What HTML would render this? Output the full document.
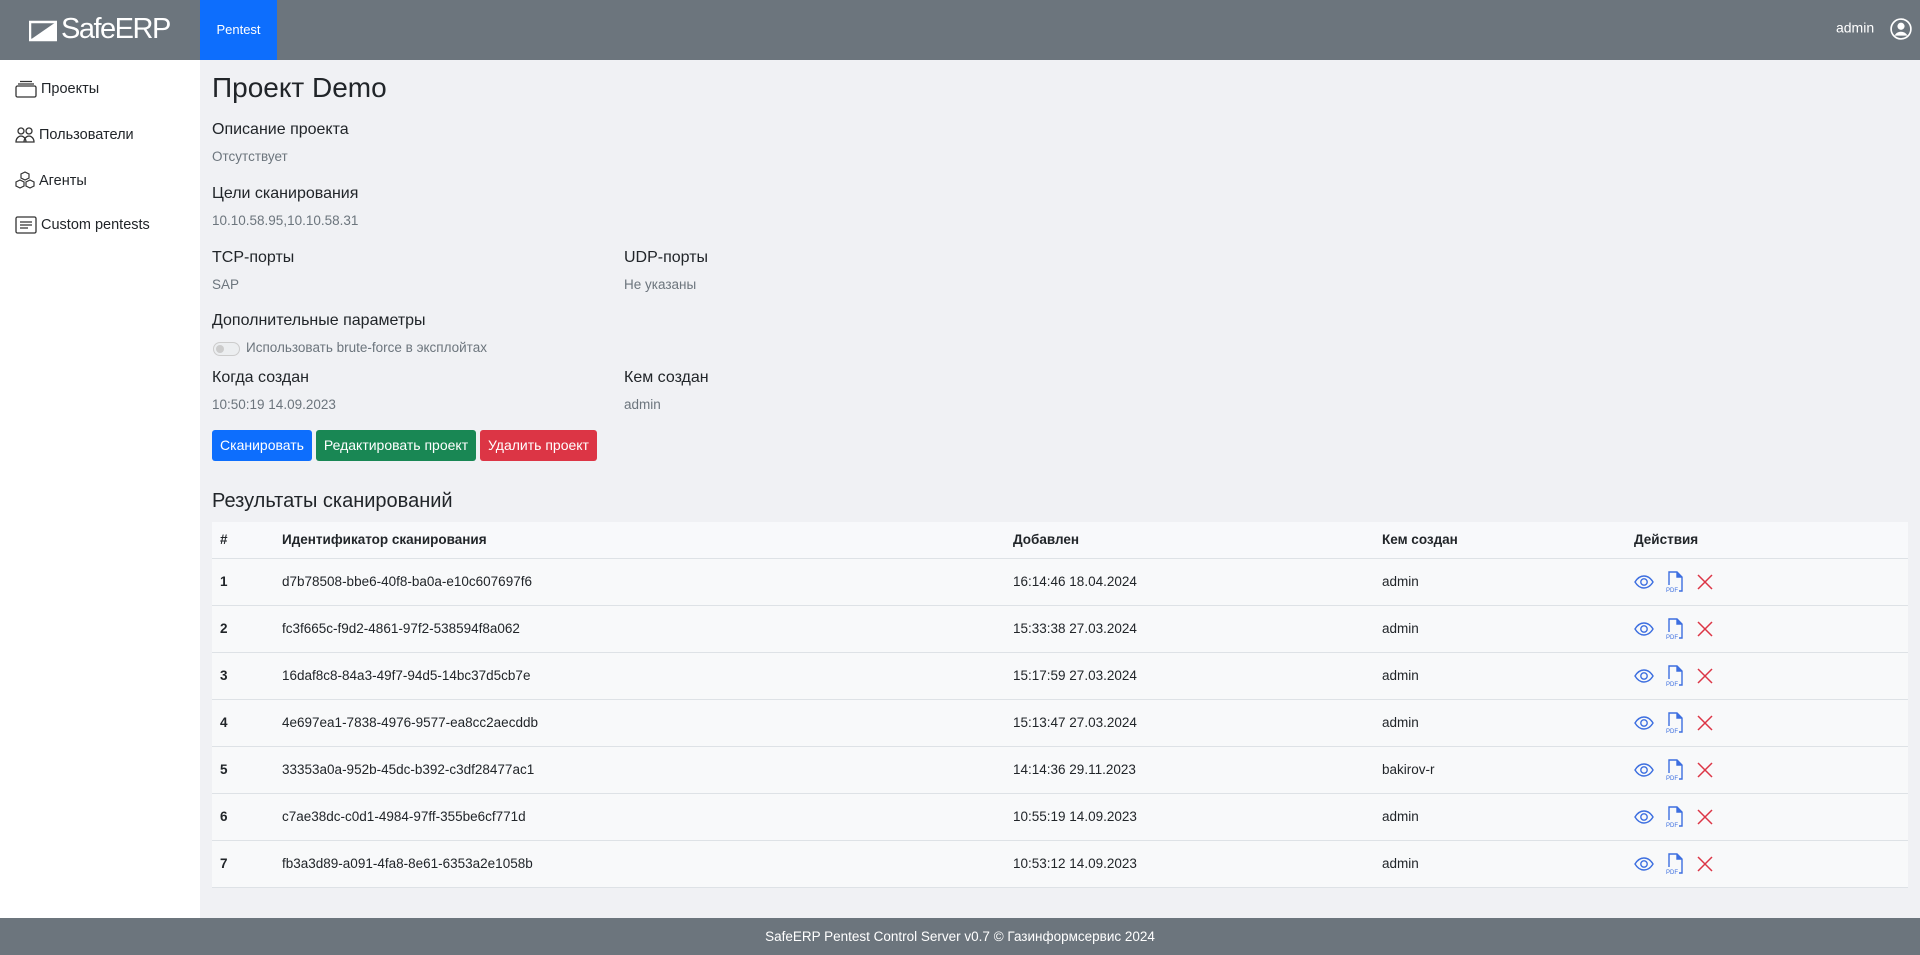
<!DOCTYPE html>
<html><head><meta charset="utf-8"><style>
*{box-sizing:border-box;margin:0;padding:0}
body{width:1920px;height:955px;overflow:hidden;font-family:"Liberation Sans","Noto Sans CJK SC",sans-serif;background:#f0f1f4;color:#212529;position:relative}
.nav{position:absolute;left:0;top:0;width:1920px;height:60px;background:#6c757d}
.logo{position:absolute;left:29px;top:13px;color:#fff;font-size:29px;display:flex;align-items:center;letter-spacing:-1.5px}
.tab{position:absolute;left:200px;top:0;width:77px;height:60px;background:#0d6efd;color:#fff;font-size:13px;text-align:center;line-height:60px}
.admin{position:absolute;right:8px;top:18px;color:#fff;font-size:14px}
.side{position:absolute;left:0;top:60px;width:200px;height:858px;background:#fff}
.si{position:absolute;left:15px;font-size:14.5px;display:flex;align-items:center;gap:4px}
.t{position:absolute;font-size:16px;white-space:nowrap}
.v{position:absolute;font-size:13.5px;color:#6c757d;white-space:nowrap}
.btn{position:absolute;top:430px;height:31px;color:#fff;font-size:14px;line-height:31px;text-align:center;border-radius:3px}
table{position:absolute;left:212px;top:522px;width:1696px;border-collapse:collapse;font-size:13.5px;background:#f8f9fa}
td,th{text-align:left;border-bottom:1px solid #dee2e6;padding:0 0 0 8px}
th{height:36px;font-weight:bold}
td{height:47px}
td:first-child{font-weight:bold}
.foot{position:absolute;left:0;top:918px;width:1920px;height:37px;background:#6c757d;color:#fff;font-size:13.5px;text-align:center;line-height:37px}
.ic{display:inline-flex;gap:12px;align-items:center;vertical-align:middle}
</style></head><body>
<div class="nav">
<div class="logo"><svg width="28" height="24" viewBox="0 0 28 24"><rect x="1" y="4" width="26" height="18" fill="none" stroke="#fff" stroke-width="2.5"/><path d="M1 22 L27 4 L27 22Z" fill="#fff"/></svg><span style="margin-left:4px">Safe<b style="font-weight:normal">ERP</b></span></div>
<div class="tab">Pentest</div>
<div class="admin">admin <svg width="22" height="22" viewBox="0 0 16 16" style="vertical-align:middle;margin-left:12px"><circle cx="8" cy="8" r="7.2" fill="none" stroke="#fff" stroke-width="1.2"/><circle cx="8" cy="6" r="2.6" fill="#fff"/><path d="M3.3 12.8C4.5 10.8 6 10 8 10s3.5.8 4.7 2.8" fill="#fff"/></svg></div>
</div>
<div class="side">
<div class="si" style="top:20px"><svg width="22" height="18" viewBox="0 0 22 18" fill="none" stroke="#333" stroke-width="1.3"><rect x="1" y="6" width="20" height="11" rx="1.5"/><path d="M3 4h16M5 1.5h12"/></svg>Проекты</div>
<div class="si" style="top:66px"><svg width="20" height="18" viewBox="0 0 20 18" fill="none" stroke="#333" stroke-width="1.3"><circle cx="6" cy="5" r="3"/><circle cx="14" cy="5" r="3"/><path d="M1 16c0-4 3-6 5-6s5 2 5 6zM9 16c0-4 3-6 5-6s5 2 5 6z"/></svg>Пользователи</div>
<div class="si" style="top:111px"><svg width="20" height="20" viewBox="0 0 20 20" fill="none" stroke="#333" stroke-width="1.2"><path d="M10 1l4 2v4l-4 2-4-2V3zM5 9l4 2v4l-4 2-4-2v-4zM15 9l4 2v4l-4 2-4-2v-4z"/></svg>Агенты</div>
<div class="si" style="top:156px"><svg width="22" height="18" viewBox="0 0 22 18" fill="none" stroke="#333" stroke-width="1.3"><rect x="1" y="1" width="20" height="16" rx="1.5"/><path d="M5 6h12M5 9h12M5 12h8"/></svg>Custom pentests</div>
</div>
<div class="t" style="left:212px;top:72px;font-size:28px">Проект Demo</div>
<div class="t" style="left:212px;top:121px">Описание проекта</div>
<div class="v" style="left:212px;top:149px">Отсутствует</div>
<div class="t" style="left:212px;top:185px">Цели сканирования</div>
<div class="v" style="left:212px;top:213px">10.10.58.95,10.10.58.31</div>
<div class="t" style="left:212px;top:249px">TCP-порты</div>
<div class="v" style="left:212px;top:277px">SAP</div>
<div class="t" style="left:624px;top:249px">UDP-порты</div>
<div class="v" style="left:624px;top:277px">Не указаны</div>
<div class="t" style="left:212px;top:312px">Дополнительные параметры</div>
<div style="position:absolute;left:213px;top:342px;width:27px;height:14px;border:1px solid #ccc;border-radius:7px;background:#eceef0"><div style="position:absolute;left:2px;top:2px;width:8px;height:8px;border-radius:50%;background:#ccc"></div></div>
<div class="v" style="left:246px;top:340px">Использовать brute-force в эксплойтах</div>
<div class="t" style="left:212px;top:369px">Когда создан</div>
<div class="v" style="left:212px;top:397px">10:50:19 14.09.2023</div>
<div class="t" style="left:624px;top:369px">Кем создан</div>
<div class="v" style="left:624px;top:397px">admin</div>
<div class="btn" style="left:212px;width:100px;background:#0d6efd">Сканировать</div>
<div class="btn" style="left:316px;width:160px;background:#198754">Редактировать проект</div>
<div class="btn" style="left:480px;width:117px;background:#dc3545">Удалить проект</div>
<div class="t" style="left:212px;top:490px;font-size:20px">Результаты сканирований</div>
<table>
<tr style="background:#f8f9fb"><th style="width:62px">#</th><th style="width:731px">Идентификатор сканирования</th><th style="width:369px">Добавлен</th><th style="width:252px">Кем создан</th><th>Действия</th></tr>
<tr><td>1</td><td>d7b78508-bbe6-40f8-ba0a-e10c607697f6</td><td>16:14:46 18.04.2024</td><td>admin</td><td>I</td></tr>
<tr><td>2</td><td>fc3f665c-f9d2-4861-97f2-538594f8a062</td><td>15:33:38 27.03.2024</td><td>admin</td><td>I</td></tr>
<tr><td>3</td><td>16daf8c8-84a3-49f7-94d5-14bc37d5cb7e</td><td>15:17:59 27.03.2024</td><td>admin</td><td>I</td></tr>
<tr><td>4</td><td>4e697ea1-7838-4976-9577-ea8cc2aecddb</td><td>15:13:47 27.03.2024</td><td>admin</td><td>I</td></tr>
<tr><td>5</td><td>33353a0a-952b-45dc-b392-c3df28477ac1</td><td>14:14:36 29.11.2023</td><td>bakirov-r</td><td>I</td></tr>
<tr><td>6</td><td>c7ae38dc-c0d1-4984-97ff-355be6cf771d</td><td>10:55:19 14.09.2023</td><td>admin</td><td>I</td></tr>
<tr><td>7</td><td>fb3a3d89-a091-4fa8-8e61-6353a2e1058b</td><td>10:53:12 14.09.2023</td><td>admin</td><td>I</td></tr>
</table>
<div class="foot">SafeERP Pentest Control Server v0.7 © Газинформсервис 2024</div>
<script>
var ic='<span class="ic"><svg width="20" height="14" viewBox="0 0 20 14" fill="none" stroke="#3d6fe0" stroke-width="1.4"><path d="M1 7C4 2 7 1 10 1s6 1 9 6c-3 5-6 6-9 6S4 12 1 7z"/><circle cx="10" cy="7" r="3.2"/></svg><svg width="18" height="22" viewBox="0 0 18 22" fill="none" stroke="#3d6fe0" stroke-width="1.4"><path d="M13 20h3V6l-5-5H3v13"/><path d="M11 1v5h5" fill="#3d6fe0"/><text x="0" y="21" font-size="6" fill="#3d6fe0" stroke="none" font-family="Liberation Sans">PDF</text></svg><svg width="18" height="18" viewBox="0 0 18 18" stroke="#dc3545" stroke-width="1.5"><path d="M2 2l14 14M16 2L2 16"/></svg></span>';
document.querySelectorAll('tr td:last-child').forEach(function(t){t.innerHTML=ic});
</script>
</body></html>
